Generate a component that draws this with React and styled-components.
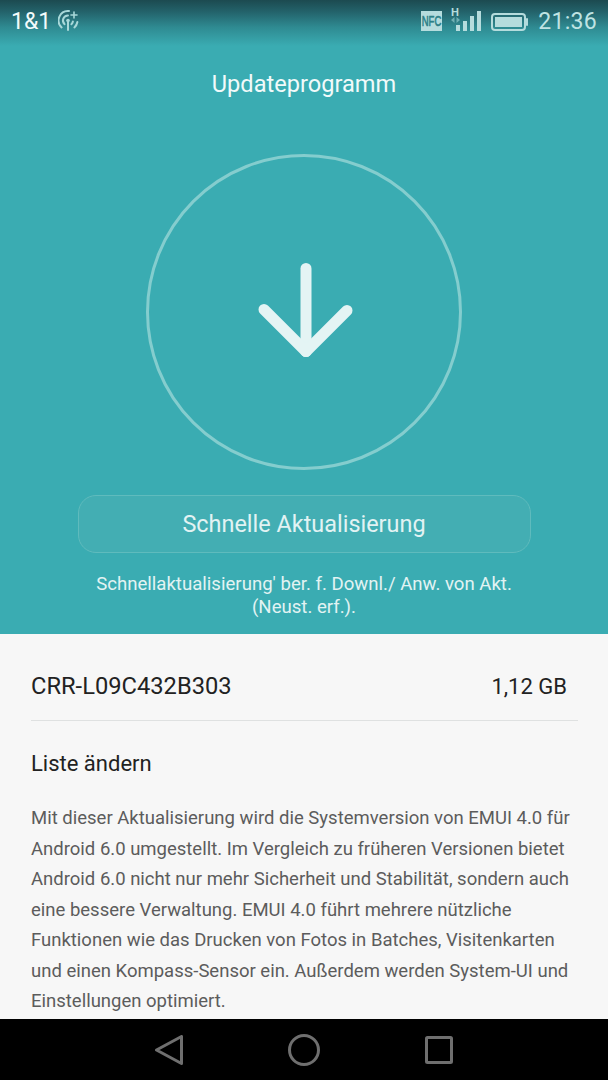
import React from "react";
import styled, { createGlobalStyle } from "styled-components";

const Global = createGlobalStyle`
  html, body {
    margin: 0;
    padding: 0;
    background: #f7f7f7;
  }
  body {
    font-family: Roboto, "Liberation Sans", sans-serif;
  }
`;

const Screen = styled.div`
  width: 608px;
  height: 1080px;
  display: flex;
  flex-direction: column;
  overflow: hidden;
`;

const Hero = styled.div`
  height: 634px;
  flex: none;
  background: #3aacb2;
  display: flex;
  flex-direction: column;
  align-items: center;
`;

const StatusBar = styled.div`
  width: 100%;
  height: 46px;
  box-sizing: border-box;
  flex: none;
  padding: 0 11px 4px 11px;
  display: flex;
  align-items: center;
  justify-content: space-between;
  background: linear-gradient(#1c4a50 0%, #23626a 25%, #2f8b92 60%, #3aacb2 100%);
`;

const StatusGroup = styled.div`
  display: flex;
  align-items: center;
`;

const Carrier = styled.span`
  font-size: 23px;
  color: #f2fbfb;
  margin-right: 7px;
`;

const Clock = styled.span`
  font-size: 23px;
  color: #bfe3e3;
  margin-left: 10px;
  letter-spacing: 0.3px;
`;

const StatusIcon = styled.svg`
  display: block;
  flex: none;
  margin-left: ${({ $gap }) => $gap || 0}px;
`;

const Title = styled.div`
  margin-top: 24px;
  font-size: 23.6px;
  line-height: 28px;
  color: #f1fafa;
`;

const Ring = styled.div`
  width: 316px;
  height: 316px;
  box-sizing: border-box;
  margin-top: 56px;
  border: 3px solid #84cdce;
  border-radius: 50%;
  display: flex;
  align-items: center;
  justify-content: center;
`;

const Arrow = styled.svg`
  display: block;
  flex: none;
`;

const QuickButton = styled.div`
  width: 453px;
  height: 58px;
  box-sizing: border-box;
  margin-top: 25px;
  border: 1px solid #5fbbbd;
  border-radius: 18px;
  background: #43aeb3;
  color: #e2f3f3;
  font-size: 23.45px;
  display: flex;
  align-items: center;
  justify-content: center;
`;

const Hint = styled.div`
  margin-top: 20px;
  width: 520px;
  font-size: 18.6px;
  line-height: 22.5px;
  color: #e2f3f3;
  text-align: center;
`;

const Details = styled.div`
  flex: 1;
  min-height: 0;
  background: #f7f7f7;
  padding: 0 30px 0 31px;
  overflow: hidden;
`;

const VersionRow = styled.div`
  height: 87px;
  box-sizing: border-box;
  padding: 18px 11px 0 0;
  border-bottom: 1px solid #dfe1e1;
  display: flex;
  align-items: center;
  justify-content: space-between;
  color: #222;
`;

const VersionName = styled.span`
  font-size: 23.7px;
`;

const VersionSize = styled.span`
  font-size: 22px;
`;

const SectionTitle = styled.div`
  margin-top: 29px;
  font-size: 22px;
  line-height: 28px;
  color: #222;
`;

const Body = styled.div`
  margin-top: 25px;
  font-size: 18.5px;
  line-height: 30.5px;
  color: #5c5c5c;
  white-space: nowrap;
`;

const NavBar = styled.div`
  height: 61px;
  flex: none;
  background: #000;
  display: flex;
  align-items: center;
  justify-content: center;
  gap: 105px;
`;

const NavIcon = styled.svg`
  display: block;
  fill: none;
  stroke: #6f6f6f;
  stroke-width: 3;
  stroke-linejoin: round;
`;

function App() {
  return (
    <Screen>
      <Global />
      <Hero>
        <StatusBar>
          <StatusGroup>
            <Carrier>1&amp;1</Carrier>
            <StatusIcon width="22" height="30" viewBox="0 0 22 30" fill="none" stroke="#a8d8d9" strokeWidth="2" strokeLinecap="round">
              <path d="M10 15v9" />
              <circle cx="10" cy="14.5" r="1.8" fill="#a8d8d9" stroke="none" />
              <path d="M6.6 18.2a5 5 0 0 1 3.4-8.7" />
              <path d="M14.9 15.5a5 5 0 0 1-1.5 2.7" />
              <path d="M3.6 21.4a9.5 9.5 0 0 1 7.4-16.4" />
              <path d="M19.4 16a9.5 9.5 0 0 1-3 5.4" />
              <path d="M16 6v6M13 9h6" strokeWidth="1.6" />
            </StatusIcon>
          </StatusGroup>
          <StatusGroup>
            <StatusIcon width="21" height="30" viewBox="0 0 21 30">
              <rect width="21" height="20" y="5" fill="#b5dcdd" />
              <text transform="translate(10.5 20) scale(1 1.45)" x="0" y="0" fontSize="9.5" textAnchor="middle" fill="#2c8087" stroke="#2c8087" strokeWidth="0.4" fontFamily="Liberation Sans, sans-serif">NFC</text>
            </StatusIcon>
            <StatusIcon $gap={8} width="32" height="30" viewBox="0 0 32 30">
              <text x="1" y="9.5" fontSize="11" fontWeight="700" fill="#b5dcdd" fontFamily="Liberation Sans, sans-serif">H</text>
              <path d="M1 14l3.5-3v6zM10 14l-3.5-3v6z" fill="#6fb0b3" />
              <rect x="6" y="19" width="4" height="6" fill="#b5dcdd" />
              <rect x="13" y="15" width="4" height="10" fill="#b5dcdd" />
              <rect x="20" y="10" width="4" height="15" fill="#b5dcdd" />
              <rect x="27" y="5" width="4" height="20" fill="#b5dcdd" />
            </StatusIcon>
            <StatusIcon $gap={9} width="37" height="30" viewBox="0 0 37 30">
              <rect x="1" y="8" width="33" height="16" rx="3" fill="none" stroke="#b5dcdd" strokeWidth="2" />
              <rect x="4" y="11" width="27" height="10" fill="#b5dcdd" />
              <rect x="35" y="12" width="2" height="8" rx="1" fill="#b5dcdd" />
            </StatusIcon>
            <Clock>21:36</Clock>
          </StatusGroup>
        </StatusBar>
        <Title>Updateprogramm</Title>
        <Ring>
          <Arrow width="100" height="100" viewBox="0 0 100 100" fill="none" stroke="#e4f4f4" strokeWidth="11" strokeLinecap="round" strokeLinejoin="round">
            <path d="M52 6.5v83" />
            <path d="M10 47.5l42 42 41-41" />
          </Arrow>
        </Ring>
        <QuickButton>Schnelle Aktualisierung</QuickButton>
        <Hint>
          Schnellaktualisierung' ber. f. Downl./ Anw. von Akt.
          <br />
          (Neust. erf.).
        </Hint>
      </Hero>
      <Details>
        <VersionRow>
          <VersionName>CRR-L09C432B303</VersionName>
          <VersionSize>1,12 GB</VersionSize>
        </VersionRow>
        <SectionTitle>Liste ändern</SectionTitle>
        <Body>
          Mit dieser Aktualisierung wird die Systemversion von EMUI 4.0 für
          <br />
          Android 6.0 umgestellt. Im Vergleich zu früheren Versionen bietet
          <br />
          Android 6.0 nicht nur mehr Sicherheit und Stabilität, sondern auch
          <br />
          eine bessere Verwaltung. EMUI 4.0 führt mehrere nützliche
          <br />
          Funktionen wie das Drucken von Fotos in Batches, Visitenkarten
          <br />
          und einen Kompass-Sensor ein. Außerdem werden System-UI und
          <br />
          Einstellungen optimiert.
        </Body>
      </Details>
      <NavBar>
        <NavIcon width="28" height="30" viewBox="0 0 28 30">
          <path d="M26.5 1.5v27L1.5 15z" />
        </NavIcon>
        <NavIcon width="32" height="32" viewBox="0 0 32 32">
          <circle cx="16" cy="16" r="14.5" />
        </NavIcon>
        <NavIcon width="28" height="28" viewBox="0 0 28 28">
          <rect x="1.5" y="1.5" width="25" height="25" rx="1" />
        </NavIcon>
      </NavBar>
    </Screen>
  );
}

export default App;
